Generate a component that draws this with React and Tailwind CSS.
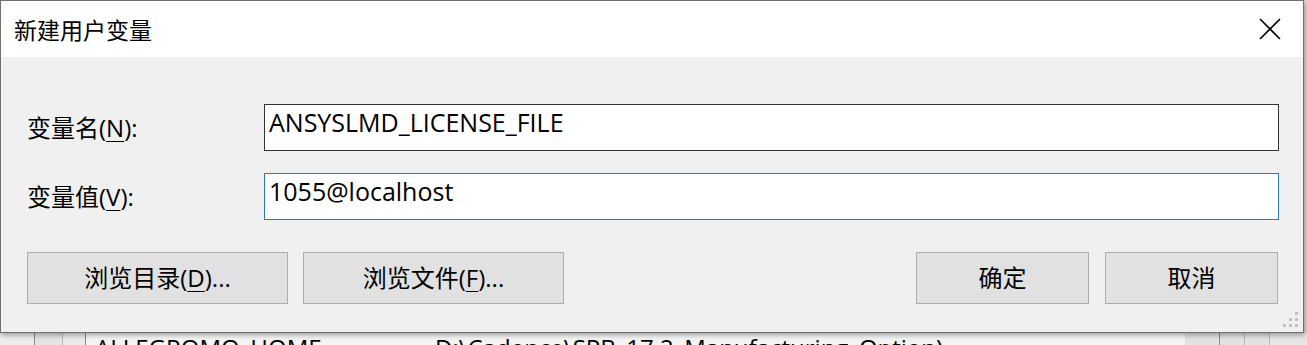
import React from "react";

const F = "font-['Segoe_UI','Open_Sans','Noto_Sans_CJK_SC',sans-serif]";

function Btn({ w, children }) {
  return (
    <button
      className={`h-[52px] ${w} bg-[#e1e1e1] border border-[#adadad] text-[24px] leading-[30px] text-black flex items-center justify-center`}
    >
      {children}
    </button>
  );
}

export default function App() {
  return (
    <div className={`w-[1307px] h-[345px] overflow-hidden bg-[#f0f0f0] flex flex-col ${F}`}>
      {/* background window strip above */}
      <div className="h-[2px] flex bg-[#ececec]">
        <div className="w-[33px]" />
        <div className="w-[2px] bg-[#8a8a8a]" />
        <div className="w-[50px]" />
        <div className="w-[1px] bg-[#9a9a9a]" />
        <div className="w-[1180px]" />
        <div className="w-[1px] bg-[#9a9a9a]" />
      </div>
      <div className="flex">
        {/* dialog */}
        <div className="relative z-10 w-[1304px] h-[333px] border border-[#707070] bg-[#f0f0f0] flex flex-col shadow-[1px_2px_5px_rgba(0,0,0,0.35)]">
          <div className="h-[56px] shrink-0 bg-white flex items-center justify-between pl-[13px] pr-[22px]">
            <span className="text-[23px] leading-[30px] text-black font-['Noto_Sans_CJK_SC',sans-serif]">新建用户变量</span>
            <svg width="22" height="22" viewBox="0 0 22 22" className="mb-[1px]">
              <path d="M1 1 L21 21 M21 1 L1 21" stroke="#000" strokeWidth="1.6" fill="none" />
            </svg>
          </div>
          <div className="flex-1 flex flex-col pl-[26px] pr-[24px] pt-[47px]">
            <div className="flex items-center h-[47px]">
              <div className="w-[237px] text-[24px] leading-[30px] text-black">
                变量名(<span className="underline underline-offset-[4px] decoration-1">N</span>):
              </div>
              <div className="flex-1 h-[47px] bg-white border border-[#333333] pl-[4px] pt-[1px] text-[25px] leading-[33px] text-black">
                ANSYSLMD_LICENSE_FILE
              </div>
            </div>
            <div className="flex items-center h-[47px] mt-[22px]">
              <div className="w-[237px] text-[24px] leading-[30px] text-black">
                变量值(<span className="underline underline-offset-[4px] decoration-1">V</span>):
              </div>
              <div className="flex-1 h-[47px] bg-white border border-[#2a7ac0] pl-[4px] pt-[1px] text-[25px] leading-[33px] text-black">
                1055@localhost
              </div>
            </div>
            <div className="flex items-center mt-[32px] mr-[1px]">
              <Btn w="w-[261px]">
                浏览目录(<span className="underline underline-offset-[4px] decoration-1">D</span>)...
              </Btn>
              <div className="w-[15px]" />
              <Btn w="w-[261px]">
                浏览文件(<span className="underline underline-offset-[4px] decoration-1">F</span>)...
              </Btn>
              <div className="flex-1" />
              <Btn w="w-[173px]">确定</Btn>
              <div className="w-[16px]" />
              <Btn w="w-[173px]">取消</Btn>
            </div>
          </div>
          {/* resize grip */}
          <div className="absolute right-[5px] bottom-[5px] grid grid-cols-3 gap-[3px]">
            <span className="w-[3px] h-[3px]" />
            <span className="w-[3px] h-[3px]" />
            <span className="w-[3px] h-[3px] bg-[#c2c2c2]" />
            <span className="w-[3px] h-[3px]" />
            <span className="w-[3px] h-[3px] bg-[#c2c2c2]" />
            <span className="w-[3px] h-[3px] bg-[#c2c2c2]" />
            <span className="w-[3px] h-[3px] bg-[#c2c2c2]" />
            <span className="w-[3px] h-[3px] bg-[#c2c2c2]" />
            <span className="w-[3px] h-[3px] bg-[#c2c2c2]" />
          </div>
        </div>
        <div className="flex-1 bg-[#dcdcdc]" />
      </div>
      {/* background window strip below */}
      <div className="flex-1 flex bg-[#f4f4f4]">
        <div className="w-[34px] bg-[#ececec]" />
        <div className="w-[1px] bg-[#8a8a8a]" />
        <div className="w-[27px] bg-[#e4e4e4]" />
        <div className="w-[1px] bg-[#b8b8b8]" />
        <div className="w-[22px] bg-[#eaeaea]" />
        <div className="w-[1px] bg-[#8a8a8a]" />
        <div className="w-[9px]" />
        <div className="w-[340px] text-[24px] leading-[30px] text-black whitespace-nowrap">ALLEGROMO_HOME</div>
        <div className="w-[750px] text-[24px] leading-[30px] text-black whitespace-nowrap">D:\Cadence\SPB_17.2_Manufacturing_Option)</div>
        <div className="w-[34px] bg-[#e2e2e2]" />
        <div className="w-[1px] bg-[#8a8a8a]" />
        <div className="w-[24px] bg-[#e2e2e2]" />
        <div className="w-[1px] bg-[#b8b8b8]" />
        <div className="w-[24px] bg-[#e2e2e2]" />
        <div className="w-[1px] bg-[#b8b8b8]" />
        <div className="flex-1 bg-[#e6e6e6]" />
      </div>
    </div>
  );
}
